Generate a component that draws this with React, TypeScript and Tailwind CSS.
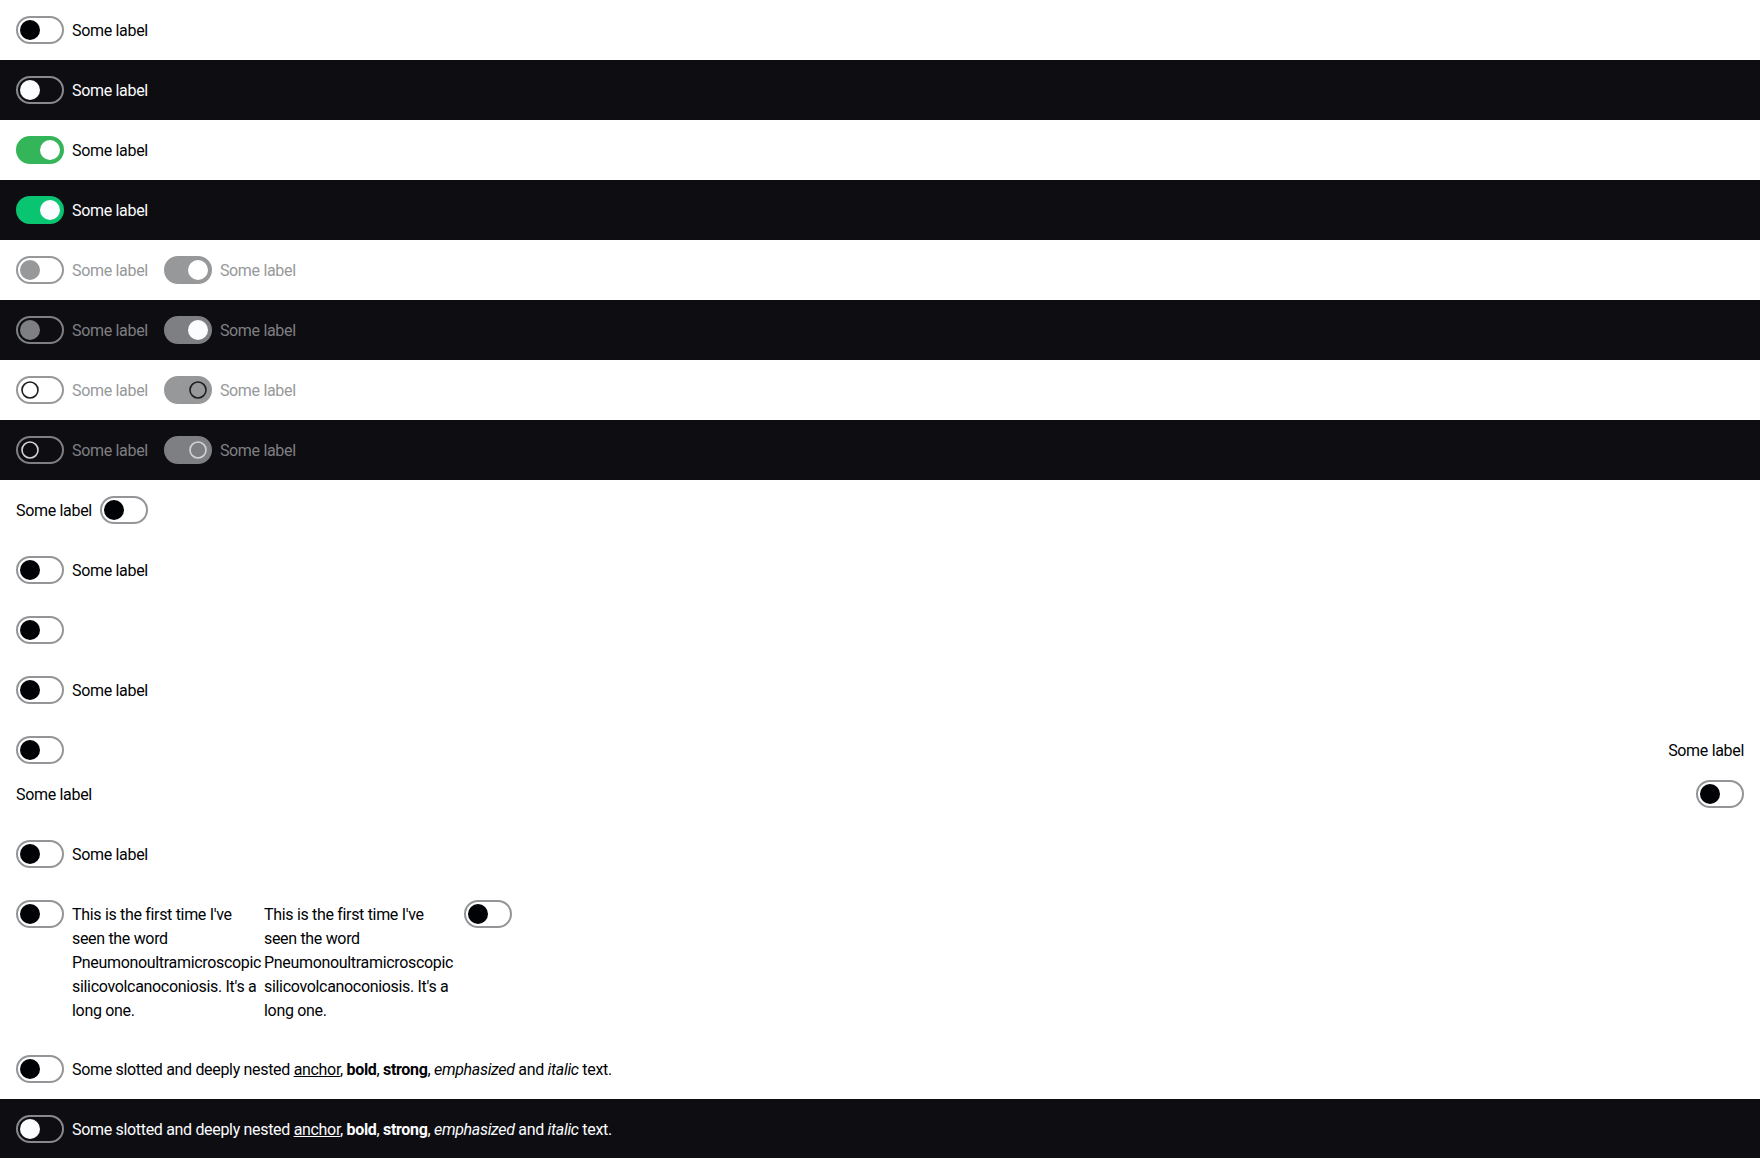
import React from "react";

type Theme = "light" | "dark";

interface SwitchProps {
  checked?: boolean;
  theme?: Theme;
  disabled?: boolean;
  loading?: boolean;
}

// track + knob colours per state
const trackClass = ({ checked, theme = "light", disabled, loading }: SwitchProps) => {
  const dark = theme === "dark";
  if (disabled || loading) {
    if (checked) return dark ? "border-[#7e7f82] bg-[#7e7f82]" : "border-[#96989a] bg-[#96989a]";
    return dark ? "border-[#7e7f82] bg-transparent" : "border-[#96989a] bg-transparent";
  }
  if (checked) return dark ? "border-[#09c470] bg-[#09c470]" : "border-[#35b55a] bg-[#35b55a]";
  return dark ? "border-[#88898c] bg-transparent" : "border-[#949598] bg-transparent";
};

const knobClass = ({ checked, theme = "light", disabled }: SwitchProps) => {
  const dark = theme === "dark";
  if (checked) return dark ? "bg-[#fbfcff]" : "bg-white";
  if (disabled) return dark ? "bg-[#7e7f82]" : "bg-[#96989a]";
  return dark ? "bg-[#fbfcff]" : "bg-[#010205]";
};

const Spinner = ({ theme }: { theme: Theme }) => (
  <svg viewBox="0 0 20 20" className="w-5 h-5">
    <circle
      cx="10"
      cy="10"
      r="8"
      fill="none"
      strokeWidth="1.6"
      stroke={theme === "dark" ? "#d4d5d8" : "#1c1d20"}
    />
  </svg>
);

const Switch = (props: SwitchProps) => {
  const { checked, theme = "light", loading } = props;
  return (
    <span
      className={`flex shrink-0 w-12 h-7 rounded-full border-2 items-center px-[2px] ${
        checked ? "justify-end" : "justify-start"
      } ${trackClass(props)}`}
    >
      {loading ? (
        <Spinner theme={theme} />
      ) : (
        <span className={`block w-5 h-5 rounded-full ${knobClass(props)}`} />
      )}
    </span>
  );
};

const labelColor = (theme: Theme, muted?: boolean) => {
  if (muted) return theme === "dark" ? "text-[#7e7f82]" : "text-[#96989a]";
  return theme === "dark" ? "text-[#fbfcff]" : "text-[#010205]";
};

const Item = ({
  label = "Some label",
  before,
  ...props
}: SwitchProps & { label?: React.ReactNode; before?: boolean }) => {
  const theme = props.theme ?? "light";
  const muted = props.disabled || props.loading;
  const text = <span className={`${labelColor(theme, muted)} leading-6 pt-[2px]`}>{label}</span>;
  return (
    <div className="flex items-center gap-2">
      {before && text}
      <Switch {...props} />
      {!before && text}
    </div>
  );
};

const Row = ({ theme = "light", children }: { theme?: Theme; children: React.ReactNode }) => (
  <div className={`flex gap-4 p-4 ${theme === "dark" ? "bg-[#0e0e12]" : "bg-white"}`}>
    {children}
  </div>
);

const LongText = () => (
  <>
    This is the first time I've seen the word Pneumonoultramicroscopic<wbr />silicovolcanoconiosis. It's a long one.
  </>
);

const Slotted = () => (
  <>
    Some slotted and deeply nested <a className="underline">anchor</a>, <b className="font-bold">bold</b>,{" "}
    <strong className="font-bold">strong</strong>, <em className="italic">emphasized</em> and{" "}
    <i className="italic">italic</i> text.
  </>
);

export default function App() {
  return (
    <div
      className="min-h-screen bg-white text-base tracking-[-0.02em]"
      style={{ fontFamily: "Roboto, 'Liberation Sans', sans-serif" }}
    >
      <Row>
        <Item />
      </Row>
      <Row theme="dark">
        <Item theme="dark" />
      </Row>
      <Row>
        <Item checked />
      </Row>
      <Row theme="dark">
        <Item checked theme="dark" />
      </Row>

      <Row>
        <Item disabled />
        <Item disabled checked />
      </Row>
      <Row theme="dark">
        <Item disabled theme="dark" />
        <Item disabled checked theme="dark" />
      </Row>
      <Row>
        <Item loading />
        <Item loading checked />
      </Row>
      <Row theme="dark">
        <Item loading theme="dark" />
        <Item loading checked theme="dark" />
      </Row>

      <Row>
        <Item before />
      </Row>
      <Row>
        <Item />
      </Row>
      <Row>
        <Switch />
      </Row>
      <Row>
        <Item />
      </Row>

      <div className="flex flex-col gap-4 p-4">
        <div className="flex items-center justify-between">
          <Switch />
          <span className="text-[#010205] leading-6 pt-[2px]">Some label</span>
        </div>
        <div className="flex items-center justify-between">
          <span className="text-[#010205] leading-6 pt-[2px]">Some label</span>
          <Switch />
        </div>
      </div>

      <Row>
        <Item />
      </Row>

      <div className="flex p-4">
        <div className="flex items-start gap-2">
          <Switch />
          <span className="w-[192px] pt-[3px] leading-6 text-[#010205] break-words">
            <LongText />
          </span>
        </div>
        <div className="flex items-start gap-2">
          <span className="w-[192px] pt-[3px] leading-6 text-[#010205] break-words">
            <LongText />
          </span>
          <Switch />
        </div>
      </div>

      <Row>
        <Item label={<Slotted />} />
      </Row>
      <Row theme="dark">
        <Item theme="dark" label={<Slotted />} />
      </Row>
    </div>
  );
}
